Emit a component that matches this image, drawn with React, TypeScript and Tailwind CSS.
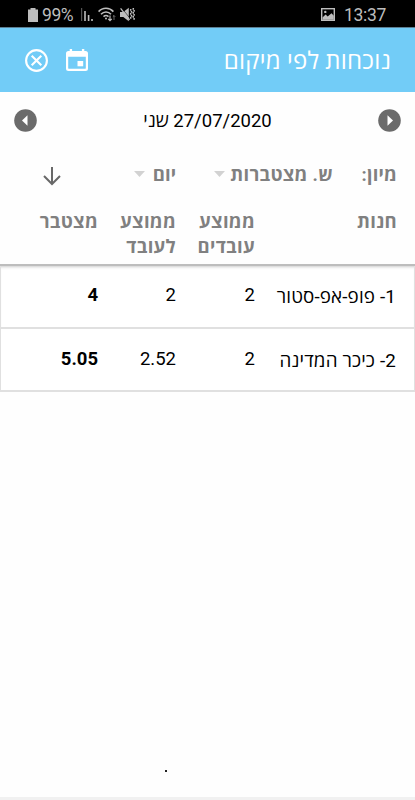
import clsx from "clsx"

// Attendance rows, one per store
const rows = [
  { store: "1- פופ-אפ-סטור", workers: "2", average: "2", total: "4" },
  { store: "2- כיכר המדינה", workers: "2", average: "2.52", total: "5.05" },
]

const columns = "grid grid-cols-[142px_79px_78px_1fr]"

function StatusBar() {
  return (
    <div dir="ltr" className="flex h-7 items-center border-b border-[#5d7f92] bg-black pl-7 pr-7 pt-[2px] text-[#bdbdbd]">
      <svg width="10" height="14" viewBox="0 0 10 14" fill="currentColor">
        <path d="M2.5 0h5v1.5H10V14H0V1.5h2.5z" />
      </svg>
      <span className="ml-1 w-[33px] whitespace-nowrap text-[17.5px] leading-6 tracking-[-0.4px]">99%</span>
      <svg className="ml-[6px]" width="12" height="14" viewBox="0 0 12 14" fill="currentColor">
        <path d="M0 0h1.2v13H0z" opacity=".45" />
        <path d="M3.2 3h1.6v10H3.2zM6.8 7h1.6v6H6.8zM10.2 11h1.6v2h-1.6z" />
      </svg>
      <svg className="ml-[5px]" width="18" height="15" viewBox="0 0 18 15" fill="none" stroke="currentColor" strokeWidth="1.6">
        <path d="M.6 4.6C4.5.2 11.5.2 15.4 4.6M3 7.2c2.8-3 7.2-3 10 0M5.5 9.7c1.5-1.4 3.5-1.4 5 0" />
        <circle cx="8" cy="11.4" r="1" fill="currentColor" stroke="none" />
        <path d="M12 8.5v5M10.2 11.8l1.8 1.8 1.8-1.8" strokeWidth="1.2" />
        <path d="M16 13V8.5M14.8 9.7L16 8.5l1.2 1.2" strokeWidth="1" opacity=".55" />
      </svg>
      <svg className="ml-[4px]" width="15" height="15" viewBox="0 0 15 15" fill="none" stroke="currentColor">
        <path d="M0 5h3.3L8.8.8v13.4L3.3 10H0z" fill="currentColor" stroke="none" />
        <path d="M2 1.5l8.4 10.3" stroke="#000" strokeWidth=".6" />
        <path d="M.6 1.3l9 11.6" strokeWidth="1.3" />
        <path d="M10.7 2v1.8M11.5 4v1.8M10.7 6v1.8M11.5 8v1.8M10.7 10v1.8M13.3 1v1.8M14.1 3v1.8M13.3 5v1.8M14.1 7v1.8M13.3 9v1.8M14.1 11v1.8" strokeWidth="1.5" />
      </svg>
      <svg className="ml-auto" width="14" height="13" viewBox="0 0 14 13" fill="none" stroke="currentColor" strokeWidth="1.4">
        <rect x=".7" y=".7" width="12.6" height="11.6" />
        <path d="M1.5 11.8V9.5L4.6 6.4l2.1 2.1 3.8-3.2 2.3 2.4v4.1z" fill="currentColor" stroke="none" />
        <circle cx="4.3" cy="3.9" r="1.2" fill="currentColor" stroke="none" />
      </svg>
      <span className="ml-[9px] w-[43px] whitespace-nowrap text-[17.5px] leading-6 tracking-[-0.3px]">13:37</span>
    </div>
  )
}

function Header() {
  return (
    <header className="flex h-16 items-center justify-between bg-[#72ccf7] pl-[25px] pr-[24px] text-white">
      <h1 className="whitespace-nowrap pt-px text-[24px] leading-8 tracking-[0.2px]">נוכחות לפי מיקום</h1>
      <div className="flex items-center gap-[18px]">
        <svg width="22" height="22" viewBox="0 0 22 22" fill="currentColor">
          <path fillRule="evenodd" d="M2.5 2h1.2V0h2.4v2h9.8V0h2.4v2h1.2A2.5 2.5 0 0 1 22 4.5v15a2.5 2.5 0 0 1-2.5 2.5h-17A2.5 2.5 0 0 1 0 19.5v-15A2.5 2.5 0 0 1 2.5 2zM2.2 7.8v11.1c0 .6.3.9.9.9h15.8c.6 0 .9-.3.9-.9V7.8z" />
          <path d="M11.5 12h5.7v5.3h-5.7z" />
        </svg>
        <svg width="23" height="23" viewBox="0 0 23 23" fill="none" stroke="currentColor" strokeWidth="2.1">
          <circle cx="11.5" cy="11.5" r="10.4" />
          <path d="M6.7 6.7l9.6 9.6M16.3 6.7l-9.6 9.6" />
        </svg>
      </div>
    </header>
  )
}

function ArrowButton({ next }: { next?: boolean }) {
  return (
    <button className="size-[23px]">
      <svg className={clsx(next && "rotate-180")} width="23" height="23" viewBox="0 0 23 23">
        <circle cx="11.5" cy="11.5" r="11.3" fill="#6b6b6b" />
        <path d="M13.5 6.2v10.6L8 11.5z" fill="#fff" />
      </svg>
    </button>
  )
}

function Caret() {
  return (
    <svg className="mb-[5px]" width="11" height="6" viewBox="0 0 11 6" fill="#d2d2d2">
      <path d="M0 0h11L5.5 6z" />
    </svg>
  )
}

export default function App() {
  return (
    <div
      dir="rtl"
      className="flex h-[800px] w-[415px] flex-col overflow-hidden bg-[#fefefe] font-[Roboto,'Open_Sans',sans-serif] text-black"
    >
      <StatusBar />
      <Header />

      <div className="flex h-[56px] items-center justify-between pl-[14px] pr-[14px]">
        <ArrowButton next />
        <span className="whitespace-nowrap pt-[3px] text-[18.5px]">27/07/2020 שני</span>
        <ArrowButton />
      </div>

      <div className="flex h-[54px] items-center pr-[18px] pt-[2px] text-[18.5px] font-bold text-[#808080]">
        <span className="w-[64px] whitespace-nowrap tracking-[0.2px]">מיון:</span>
        <div className="flex w-[139px] items-center justify-between whitespace-nowrap pl-[20px]">
          <span className="tracking-[0.3px]">ש. מצטברות</span>
          <Caret />
        </div>
        <div className="mr-[18px] flex w-[84px] items-center justify-between whitespace-nowrap pl-[42px]">
          <span>יום</span>
          <Caret />
        </div>
        <svg className="mr-[31px]" width="18" height="19" viewBox="0 0 18 19" fill="none" stroke="#686868" strokeWidth="2">
          <path d="M9 0v17M1 9l8 8 8-8" />
        </svg>
      </div>

      <div
        className={clsx(
          columns,
          "h-[62px] pr-[18px] pt-[8px] text-[18.5px] font-bold leading-[25px] tracking-[0.3px] text-[#808080]"
        )}
      >
        <span>חנות</span>
        <span>
          ממוצע
          <br />
          עובדים
        </span>
        <span>
          ממוצע
          <br />
          לעובד
        </span>
        <span>מצטבר</span>
      </div>

      <div className="border-t-2 border-[#bdbdbd]">
        {rows.map((row) => (
          <div
            key={row.store}
            className={clsx(
              columns,
              "h-[63px] border-x border-b-2 border-[#e0e0e0] bg-white pr-[17px] pt-[16px] text-[18.5px] leading-[26px]",
              "first:shadow-[inset_0_3px_3px_-2px_#cccccc] last:pt-[17px]"
            )}
          >
            <span className="whitespace-nowrap pr-px pt-[2px] text-[18.8px] tracking-[0.15px]">{row.store}</span>
            <span>{row.workers}</span>
            <span>{row.average}</span>
            <span className="font-bold">{row.total}</span>
          </div>
        ))}
      </div>

      <div className="mt-auto flex h-[45px] flex-col justify-between">
        <span className="mr-[248px] mt-[15px] size-[2px] bg-[#222]" />
        <div className="h-[3px] bg-[#f1f1f1]" />
      </div>
    </div>
  )
}
